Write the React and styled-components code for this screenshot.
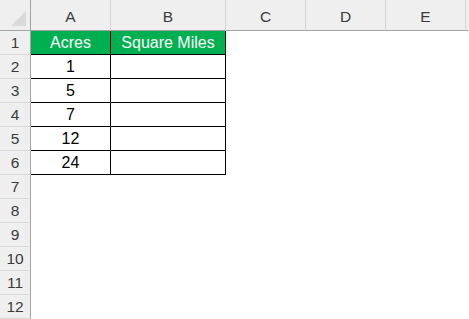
import React from "react";
import styled, { createGlobalStyle } from "styled-components";

const GlobalStyle = createGlobalStyle`
  html, body {
    margin: 0;
    padding: 0;
    background: #ffffff;
  }
  body {
    font-family: "Liberation Sans", Arial, sans-serif;
    overflow: hidden;
  }
`;

const Sheet = styled.div`
  display: grid;
  grid-template-columns: 31px 80px 115px 80px 80px 80px 1fr;
  grid-template-rows: 31px repeat(12, 24px);
  width: 469px;
  height: 319px;
  background: #ffffff;
`;

const Corner = styled.div`
  position: relative;
  background: #efefef;
  border-right: 1px solid #a3a3a3;
  border-bottom: 1px solid #a3a3a3;
  box-sizing: border-box;

  &::after {
    content: "";
    position: absolute;
    right: 4px;
    bottom: 4px;
    width: 0;
    height: 0;
    border-left: 15px solid transparent;
    border-bottom: 15px solid #dadada;
  }
`;

const ColHeader = styled.div`
  display: flex;
  align-items: center;
  justify-content: center;
  padding-top: 3px;
  box-sizing: border-box;
  background: #efefef;
  border-bottom: 1px solid #a3a3a3;
  border-right: 1px solid ${(p) => (p.$last ? "#efefef" : "#d6d6d6")};
  color: #3b3b3b;
  font-size: 15.5px;
`;

const RowHeader = styled.div`
  display: flex;
  align-items: center;
  justify-content: center;
  box-sizing: border-box;
  background: #efefef;
  border-right: 1px solid #a3a3a3;
  border-bottom: 1px solid #d8d8d8;
  color: #3b3b3b;
  font-size: 15.5px;
`;

const Cell = styled.div`
  display: flex;
  align-items: center;
  justify-content: center;
  box-sizing: border-box;
  font-size: 16px;
  color: ${(p) => (p.$head ? "#ffffff" : "#000000")};
  background: ${(p) => (p.$head ? "#00b050" : "#ffffff")};
  border-right: 1px solid ${(p) => (p.$bordered ? "#000000" : "transparent")};
  border-bottom: 1px solid ${(p) => (p.$bordered ? "#000000" : "transparent")};
`;

const columns = ["A", "B", "C", "D", "E"];
const acres = [1, 5, 7, 12, 24];

const cellFor = (row, col) => {
  if (row === 1 && col === 0) return { text: "Acres", head: true, bordered: true };
  if (row === 1 && col === 1) return { text: "Square Miles", head: true, bordered: true };
  if (row >= 2 && row <= 6 && col === 0) return { text: acres[row - 2], bordered: true };
  if (row >= 2 && row <= 6 && col === 1) return { text: "", bordered: true };
  return { text: "" };
};

const App = () => {
  const rows = Array.from({ length: 12 }, (_, i) => i + 1);
  return (
    <>
      <GlobalStyle />
      <Sheet>
        <Corner />
        {columns.map((c) => (
          <ColHeader key={c}>{c}</ColHeader>
        ))}
        <ColHeader $last />
        {rows.map((r) => (
          <React.Fragment key={r}>
            <RowHeader>{r}</RowHeader>
            {columns.map((c, ci) => {
              const cell = cellFor(r, ci);
              return (
                <Cell key={c} $head={cell.head} $bordered={cell.bordered}>
                  {cell.text}
                </Cell>
              );
            })}
            <Cell />
          </React.Fragment>
        ))}
      </Sheet>
    </>
  );
};

export default App;
